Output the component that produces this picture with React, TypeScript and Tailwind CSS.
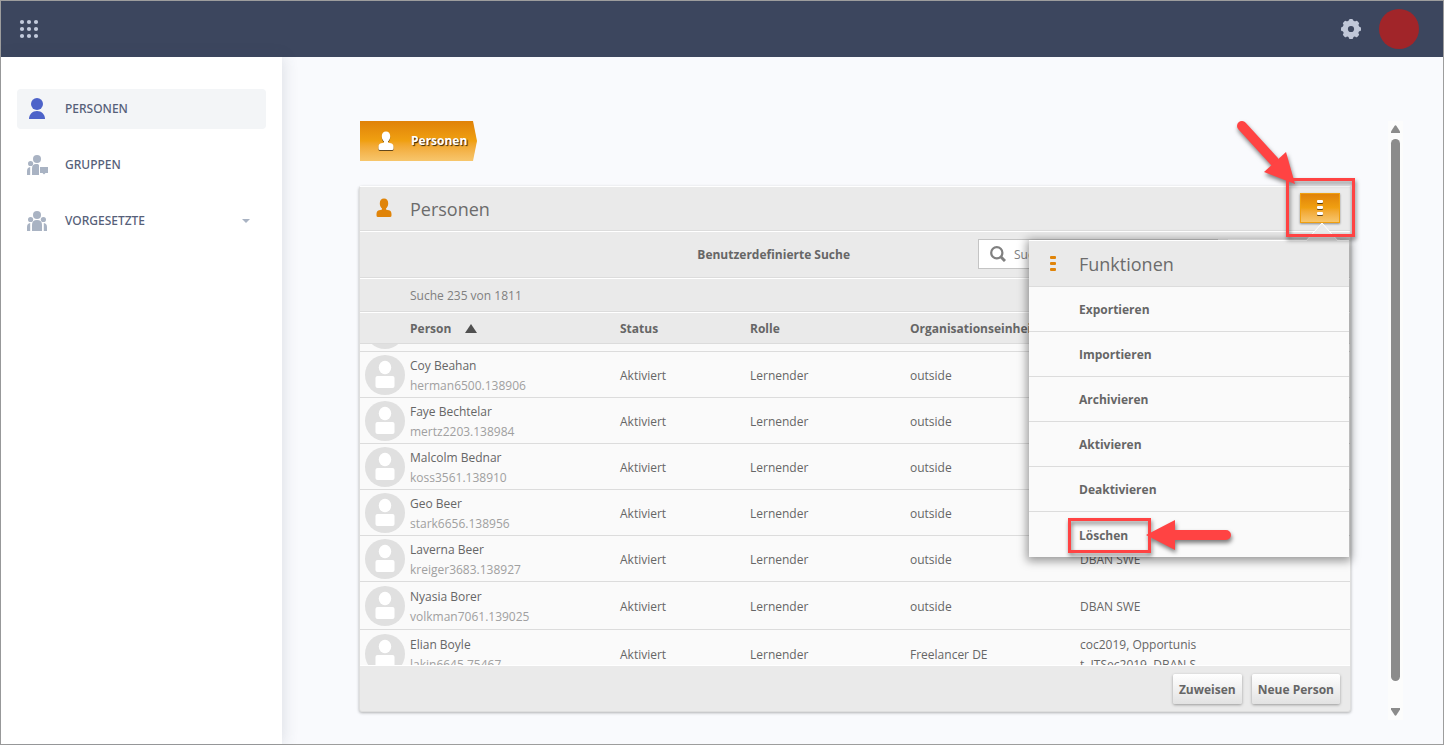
import { Fragment } from "react";

const people = [
  { name: "Coy Beahan", login: "herman6500.138906", unit: "outside", roles: "DBAN SWE", height: "h-[46px]" },
  { name: "Faye Bechtelar", login: "mertz2203.138984", unit: "outside", roles: "DBAN SWE", height: "h-[46px]" },
  { name: "Malcolm Bednar", login: "koss3561.138910", unit: "outside", roles: "DBAN SWE", height: "h-[46px]" },
  { name: "Geo Beer", login: "stark6656.138956", unit: "outside", roles: "DBAN SWE", height: "h-[46px]" },
  { name: "Laverna Beer", login: "kreiger3683.138927", unit: "outside", roles: "DBAN SWE", height: "h-[46px]" },
  { name: "Nyasia Borer", login: "volkman7061.139025", unit: "outside", roles: "DBAN SWE", height: "h-12" },
  { name: "Elian Boyle", login: "lakin6645.75467", unit: "Freelancer DE", roles: "coc2019, Opportunist, ITSec2019, DBAN S", height: "h-12" },
];

const actions = ["Exportieren", "Importieren", "Archivieren", "Aktivieren", "Deaktivieren", "Löschen"];

const PersonIcon = ({ className }: { className: string }) => (
  <svg viewBox="0 0 16 20" className={className} fill="currentColor" aria-hidden="true">
    <path d="M8 .5c2.600 0 4.200 1.800 4.200 4.700 0 2.300-.8 4.100-2.200 5.200v1c.9.500 1.900.4 3 .8 1.700.6 2.500 1.700 2.500 3.800v1.500q0 1.500-1.500 1.500H2q-1.500 0-1.500-1.500V16c0-2.100.8-3.200 2.500-3.800 1.100-.4 2.100-.3 3-.8v-1C4.600 9.300 3.800 7.500 3.800 5.200 3.800 2.300 5.400.5 8 .5z" />
  </svg>
);

const Avatar = () => (
  <svg viewBox="0 0 40 40" className="block size-10 shrink-0" aria-hidden="true">
    <circle cx="20" cy="20" r="20" fill="#e0e0e0" />
    <ellipse cx="20" cy="12.500" rx="6.200" ry="6.800" fill="#fff" />
    <path d="M12.500 21h15q2 0 2 2v8q0 2-2 2h-15q-2 0-2-2v-8q0-2 2-2z" fill="#fff" />
  </svg>
);

const DotsIcon = ({ className }: { className: string }) => (
  <svg viewBox="0 0 6 16" className={className} fill="currentColor" aria-hidden="true">
    <rect x="0" y="0" width="6" height="3" rx="1" />
    <rect x="0" y="6" width="6" height="3" rx="1" />
    <rect x="0" y="12" width="6" height="3" rx="1" />
  </svg>
);

const Header = () => (
  <header className="flex h-14 shrink-0 items-center justify-between bg-[#3c465e] pr-6 pl-[18px]">
    <button type="button" aria-label="Menü">
      <svg viewBox="0 0 20 20" className="block size-5" fill="#c3cbdc">
        {[3, 10, 17].map((y) => (
          <Fragment key={y}>
            <circle cx="3" cy={y} r="2.100" />
            <circle cx="10" cy={y} r="2.100" />
            <circle cx="17" cy={y} r="2.100" />
          </Fragment>
        ))}
      </svg>
    </button>
    <div className="flex items-center gap-[18px]">
      <button type="button" aria-label="Einstellungen">
        <svg viewBox="-10 -10 20 20" className="block size-5">
          <g fill="#c0c7d8">
            <circle r="8.400" />
            {[0, 45, 90, 135].map((angle) => (
              <rect key={angle} x="-2.300" y="-10" width="4.600" height="20" rx="1.500" transform={`rotate(${angle})`} />
            ))}
          </g>
          <circle r="3.100" fill="#3c465e" />
        </svg>
      </button>
      <button type="button" aria-label="Profil" className="size-10 rounded-full bg-[#a12529]" />
    </div>
  </header>
);

const Sidebar = () => (
  <nav className="z-10 w-[281px] shrink-0 bg-white px-4 pt-8 font-['Noto_Sans',sans-serif] text-xs font-medium text-[#566079] shadow-[2px_0_14px_rgba(60,70,94,0.14)]">
    <ul className="flex flex-col gap-4">
      <li>
        <a href="#personen" className="flex h-10 items-center gap-4 rounded bg-[#f3f5f7] px-[10px]">
          <svg viewBox="0 0 22 22" className="size-[22px]" fill="#4d63c9" aria-hidden="true">
            <circle cx="10" cy="6" r="6" />
            <path d="M2 21c0-4.500 3.500-8 8-8s8 3.500 8 8z" />
          </svg>
          PERSONEN
        </a>
      </li>
      <li>
        <a href="#gruppen" className="flex h-10 items-center gap-4 rounded px-[10px]">
          <svg viewBox="0 0 22 22" className="size-[22px]" fill="#a9b3c3" aria-hidden="true">
            <circle cx="10" cy="5" r="4" />
            <circle cx="3.600" cy="9.500" r="2.600" />
            <path d="M5 21V14.500q0-4.500 4-4.500h1.500q1.500 0 1.500 1.500V21z" />
            <path d="M0 21v-4q0-3.500 3.200-4V21zM13 13h8v6h-2.500l-1.500 1.500-1.500-1.500H13z" />
          </svg>
          GRUPPEN
        </a>
      </li>
      <li>
        <a href="#vorgesetzte" className="flex h-10 items-center gap-4 rounded px-[10px]">
          <svg viewBox="0 0 22 22" className="size-[22px]" fill="#a9b3c3" aria-hidden="true">
            <circle cx="10" cy="5" r="4" />
            <circle cx="3.600" cy="9.500" r="2.600" />
            <circle cx="16.400" cy="9.500" r="2.600" />
            <path d="M5 21V15q0-5 5-5t5 5V21z" />
            <path d="M0 21v-4q0-3.500 3.200-4V21zM20 21v-4q0-3.500-3.200-4V21z" />
          </svg>
          <span className="flex-1">VORGESETZTE</span>
          <svg viewBox="0 0 8 4" className="mr-[6px] h-1 w-2" fill="#a9b3c3" aria-hidden="true">
            <path d="M0 0h8L4 4z" />
          </svg>
        </a>
      </li>
    </ul>
  </nav>
);

const FunctionsMenu = () => (
  <div className="absolute top-[47px] right-[-9px] z-20 w-80 bg-[#fafafa] shadow-[0_2px_9px_2px_rgba(0,0,0,0.4)]">
    <svg viewBox="0 0 34 19" className="absolute -top-[18px] right-[10px] h-[19px] w-[34px]" aria-hidden="true">
      <path d="M1 19 17 1l16 18z" fill="#eaeaea" />
      <path d="M1 19 17 1l16 18" fill="none" stroke="#fff" />
    </svg>
    <div className="flex h-[47px] items-center border-t border-b border-t-white border-b-[#dcdcdc] bg-[#eaeaea]">
      <DotsIcon className="ml-[21px] h-4 w-[6px] text-[#e08409]" />
      <h2 className="ml-[23px] text-lg text-[#6c6c6c]">Funktionen</h2>
    </div>
    <ul>
      {actions.map((action) => (
        <li key={action} className="h-[45px] border-b border-[#dcdcdc] last:border-b-0">
          <button type="button" className="h-full w-full pt-[2px] pl-[50px] text-left font-bold">
            {action === "Löschen" ? (
              <span className="relative">
                {action}
                <DeleteMarker />
              </span>
            ) : (
              action
            )}
          </button>
        </li>
      ))}
    </ul>
  </div>
);

const DeleteMarker = () => (
  <span className="pointer-events-none absolute -top-[9px] -left-[11px] h-[35px] w-[83px] border-[3px] border-[#ff4343] drop-shadow-[1px_3px_2px_rgba(0,0,0,0.5)]">
    <svg viewBox="0 0 88 34" className="absolute -top-[3px] left-[74px] h-[34px] w-[88px] max-w-none" fill="#ff4343" aria-hidden="true">
      <path d="M1 17 30 2v10h51a5 5 0 0 1 0 10H30v10z" />
    </svg>
  </span>
);

const MenuMarker = () => (
  <span className="pointer-events-none absolute -top-[15px] -left-[14px] z-30 h-[59px] w-[69px] border-[3px] border-[#ff4343] drop-shadow-[1px_3px_2px_rgba(0,0,0,0.5)]">
    <svg viewBox="0 0 60 66" className="absolute -top-[61px] -left-[53px] h-[66px] w-[60px] max-w-none" fill="#ff4343" aria-hidden="true">
      <path d="M6 6 38 41" stroke="#ff4343" strokeWidth="10" strokeLinecap="round" />
      <path d="M59 64 28 52 50 32z" />
    </svg>
  </span>
);

const PeopleTable = () => (
  <div className="min-h-0 flex-1 overflow-hidden border-b border-white bg-[#fafafa]">
    <table className="w-full table-fixed border-separate border-spacing-0 text-left">
      <thead className="bg-[#eaeaea]">
        <tr className="h-8 *:border-t *:border-b *:border-t-white *:border-b-[#dcdcdc] *:pt-[2px]">
          <th className="w-[50px]" aria-label="Bild" />
          <th className="w-[210px]" aria-sort="ascending">
            <span className="flex items-center gap-[14px]">
              Person
              <svg viewBox="0 0 12 9" className="mb-[2px] h-[9px] w-3" fill="#505050" aria-hidden="true">
                <path d="M0 9 6 0l6 9z" />
              </svg>
            </span>
          </th>
          <th className="w-[130px]">Status</th>
          <th className="w-[160px]">Rolle</th>
          <th className="w-[170px]">Organisationseinheit</th>
          <th>Gruppen</th>
        </tr>
      </thead>
      <tbody>
        {/* row that is scrolled almost out of view */}
        <tr className="*:border-b *:border-[#dcdcdc]">
          <td colSpan={6}>
            <div className="flex h-[7px] items-end overflow-hidden pb-[2px] pl-[5px]">
              <Avatar />
            </div>
          </td>
        </tr>
        {people.map((person) => (
          <tr key={person.login} className={`${person.height} *:border-b *:border-[#dcdcdc]`}>
            <td className="pl-[5px]">
              <Avatar />
            </td>
            <td className="pt-[3px]">
              <div className="leading-5">{person.name}</div>
              <div className="leading-5 text-[#a0a0a0]">{person.login}</div>
            </td>
            <td className="pt-[3px]">Aktiviert</td>
            <td className="pt-[3px]">Lernender</td>
            <td className="pt-[3px]">{person.unit}</td>
            <td className="pt-[3px]">
              <div className="max-h-10 w-[120px] overflow-hidden leading-5 break-all">{person.roles}</div>
            </td>
          </tr>
        ))}
      </tbody>
    </table>
  </div>
);

const footerButton =
  "h-[30px] rounded-[2px] bg-linear-to-b from-white to-[#e2e2e2] px-[6px] pt-[2px] font-bold shadow-[0_1px_3px_rgba(0,0,0,0.35)]";

const PeoplePanel = () => (
  <section className="mt-[25px] flex min-h-0 flex-1 flex-col rounded-[3px] border-x border-b border-[#dedede] bg-[#eaeaea] shadow-[0_1px_3px_rgba(0,0,0,0.3)]">
    <div className="flex h-[45px] shrink-0 items-center border-t border-b border-t-white border-b-[#dcdcdc] pr-[10px] pb-px pl-4">
      <PersonIcon className="h-5 w-4 text-[#e08409]" />
      <h1 className="ml-[18px] flex-1 pt-px text-lg text-[#6c6c6c]">Personen</h1>
      <div className="relative">
        <button
          type="button"
          aria-label="Funktionen"
          className="flex h-[30px] w-10 items-center justify-center border border-[#f0a010] bg-linear-to-b from-[#e08209] via-[#f0a011] to-[#f7c66c] shadow-[0_1px_2px_rgba(0,0,0,0.4)]"
        >
          <DotsIcon className="h-4 w-[6px] text-white drop-shadow-[0_1px_0_rgba(0,0,0,0.6)]" />
        </button>
        <FunctionsMenu />
        <MenuMarker />
      </div>
    </div>
    <div className="flex h-[47px] shrink-0 items-center justify-end border-t border-b border-t-white border-b-[#dcdcdc] pr-[10px] pb-px">
      <button type="button" className="mr-32 pt-px font-bold">
        Benutzerdefinierte Suche
      </button>
      <label className="flex h-[30px] w-60 items-center border border-[#c4c4c4] bg-white pl-[11px]">
        <svg viewBox="0 0 16 16" className="size-4" fill="none" stroke="#808080" aria-hidden="true">
          <circle cx="6.800" cy="6.800" r="5.600" strokeWidth="2.200" />
          <path d="m11 11 4 4" strokeWidth="3" />
        </svg>
        <input aria-label="Suche" placeholder="Suche" className="ml-2 w-40 pt-px outline-none placeholder:text-[#808080]" />
      </label>
      <button type="button" aria-label="Filter" className="ml-[10px] h-[30px] w-28 bg-linear-to-b from-white to-[#e2e2e2]" />
    </div>
    <div className="flex h-[34px] shrink-0 items-center border-t border-b border-t-white border-b-[#dcdcdc] pt-[2px] pl-[50px] text-[#808080]">
      Suche 235 von 1811
    </div>
    <PeopleTable />
    <div className="flex h-[45px] shrink-0 items-center justify-end gap-[10px] pr-[10px]">
      <button type="button" className={footerButton}>
        Zuweisen
      </button>
      <button type="button" className={footerButton}>
        Neue Person
      </button>
    </div>
  </section>
);

const ScrollBar = () => (
  <div className="ml-[37px] flex w-[15px] shrink-0 flex-col items-center bg-[#fcfcfc] pt-1 pb-1">
    <svg viewBox="0 0 9 8" className="h-2 w-[9px]" fill="#8b8b8b" aria-hidden="true">
      <path d="M3.500 1q1-1.500 2 0L9 6.500V8H0V6.500z" />
    </svg>
    <div className="mt-[6px] mb-[27px] w-[9px] flex-1 rounded-full bg-[#8b8b8b]" />
    <svg viewBox="0 0 9 8" className="h-2 w-[9px] rotate-180" fill="#8b8b8b" aria-hidden="true">
      <path d="M3.500 1q1-1.500 2 0L9 6.500V8H0V6.500z" />
    </svg>
  </div>
);

export default function App() {
  return (
    <div className="flex h-screen flex-col border border-[#9d9d9d] bg-[#f9fafd] font-['Open_Sans',sans-serif] text-xs text-[#666]">
      <Header />
      <div className="flex min-h-0 flex-1">
        <Sidebar />
        <main className="flex min-w-0 flex-1 pt-16 pr-10 pb-6 pl-[77px]">
          <div className="flex min-w-0 flex-1 flex-col pb-2">
            <a
              href="#personen"
              className="ml-px flex h-10 w-[117px] shrink-0 items-center bg-linear-to-b from-[#e08209] via-[#f0a011] to-[#f7c66c] pl-[18px] font-bold text-white [clip-path:polygon(0_0,calc(100%-4px)_0,100%_50%,calc(100%-4px)_100%,0_100%)] [text-shadow:1px_1px_1px_rgba(0,0,0,0.8)]"
            >
              <PersonIcon className="h-5 w-4 drop-shadow-[0_1px_0_rgba(0,0,0,0.6)]" />
              <span className="ml-[17px]">Personen</span>
            </a>
            <PeoplePanel />
          </div>
          <ScrollBar />
        </main>
      </div>
    </div>
  );
}
